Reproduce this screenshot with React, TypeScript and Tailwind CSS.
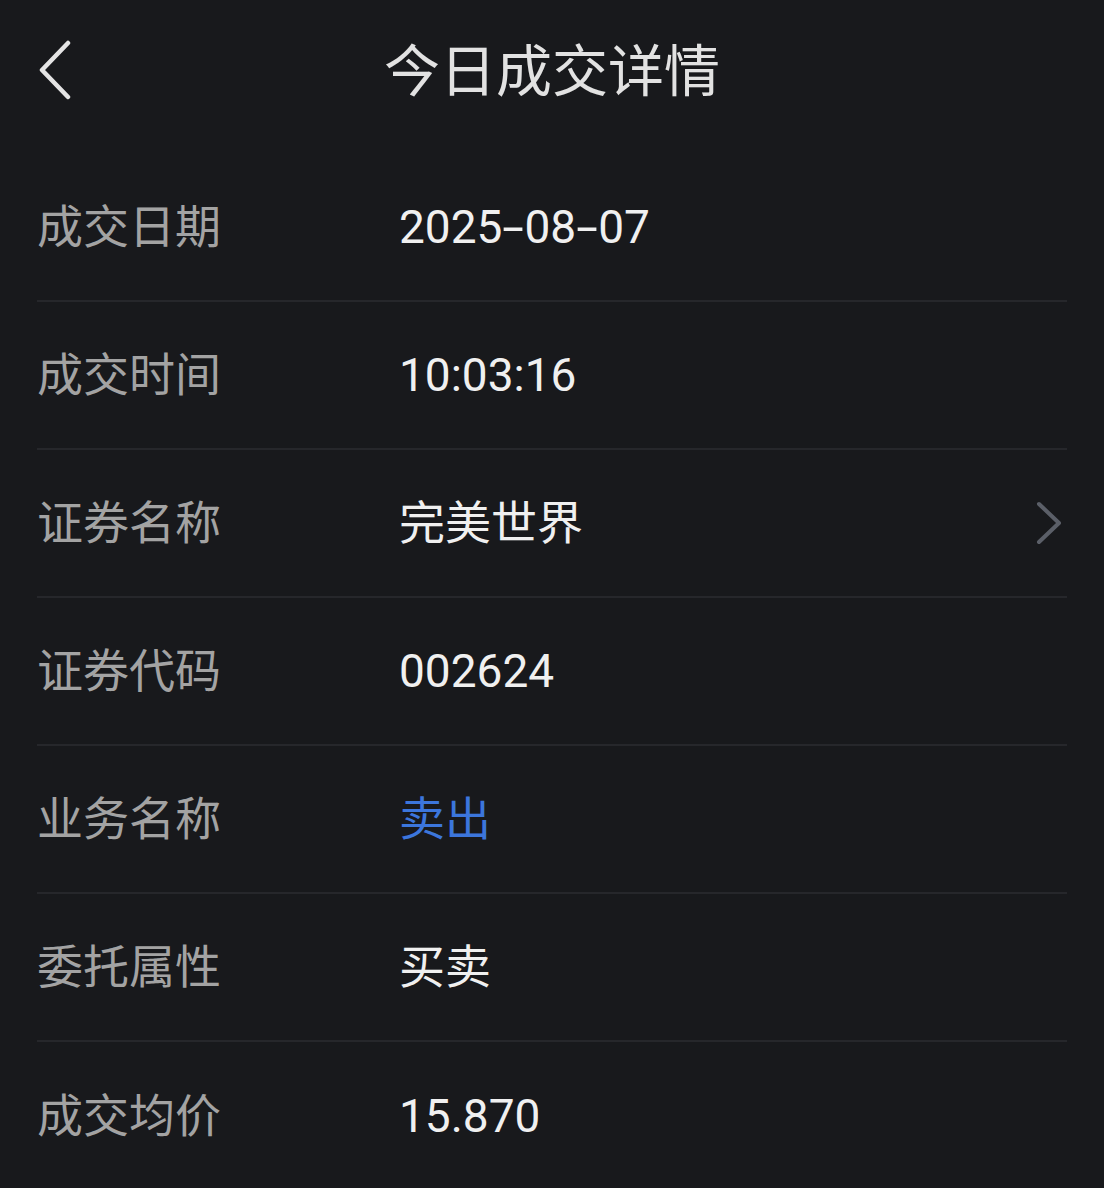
const ROWS: { label: string; value: string; blue?: boolean; link?: boolean }[] = [
  { label: '成交日期', value: '2025-08-07' },
  { label: '成交时间', value: '10:03:16' },
  { label: '证券名称', value: '完美世界', link: true },
  { label: '证券代码', value: '002624' },
  { label: '业务名称', value: '卖出', blue: true },
  { label: '委托属性', value: '买卖' },
  { label: '成交均价', value: '15.870' },
];

// hyphens in the reference font are wider than Roboto's
function Value({ text }: { text: string }) {
  const parts = text.split('-');
  return (
    <>
      {parts.map((p, i) => (
        <span key={i}>
          {i > 0 && <span className="inline-block w-[22px] scale-x-[1.7] text-center">-</span>}
          {p}
        </span>
      ))}
    </>
  );
}

export default function App() {
  return (
    <div className="h-[1188px] w-[1104px] overflow-hidden bg-[#18191c] font-['Roboto','Noto_Sans_CJK_SC',sans-serif]">
      <div className="relative flex h-[154px] items-center justify-center">
        <button className="absolute left-[38px] top-[40px] text-[#e4e4e4]">
          <svg width="34" height="60" viewBox="0 0 34 60" fill="none" stroke="currentColor" strokeWidth="4.5" strokeLinecap="round" strokeLinejoin="round">
            <path d="M30 3 L4 30 L30 57" />
          </svg>
        </button>
        <h1 className="-mt-[10px] text-[56px] font-normal text-[#e2e2e2]">今日成交详情</h1>
      </div>

      <div className="px-[37px]">
        {ROWS.map((r, i) => (
          <div
            key={r.label}
            className={`flex h-[148px] items-center ${i < ROWS.length - 1 ? 'border-b-2 border-[#26272b]' : ''}`}
          >
            <span className="w-[362px] shrink-0 text-[46px] text-[#a3a3a3]">{r.label}</span>
            <span className={`flex-1 text-[46px] ${r.blue ? 'text-[#3c76dc]' : 'text-[#f0f0f0]'}`}>
              <Value text={r.value} />
            </span>
            {r.link && (
              <svg width="28" height="44" viewBox="0 0 28 44" fill="none" stroke="#5b5f68" strokeWidth="4" strokeLinecap="round" strokeLinejoin="round" className="mr-[4px] mb-[1px]">
                <path d="M4 3 L24 22 L4 41" />
              </svg>
            )}
          </div>
        ))}
      </div>
    </div>
  );
}
